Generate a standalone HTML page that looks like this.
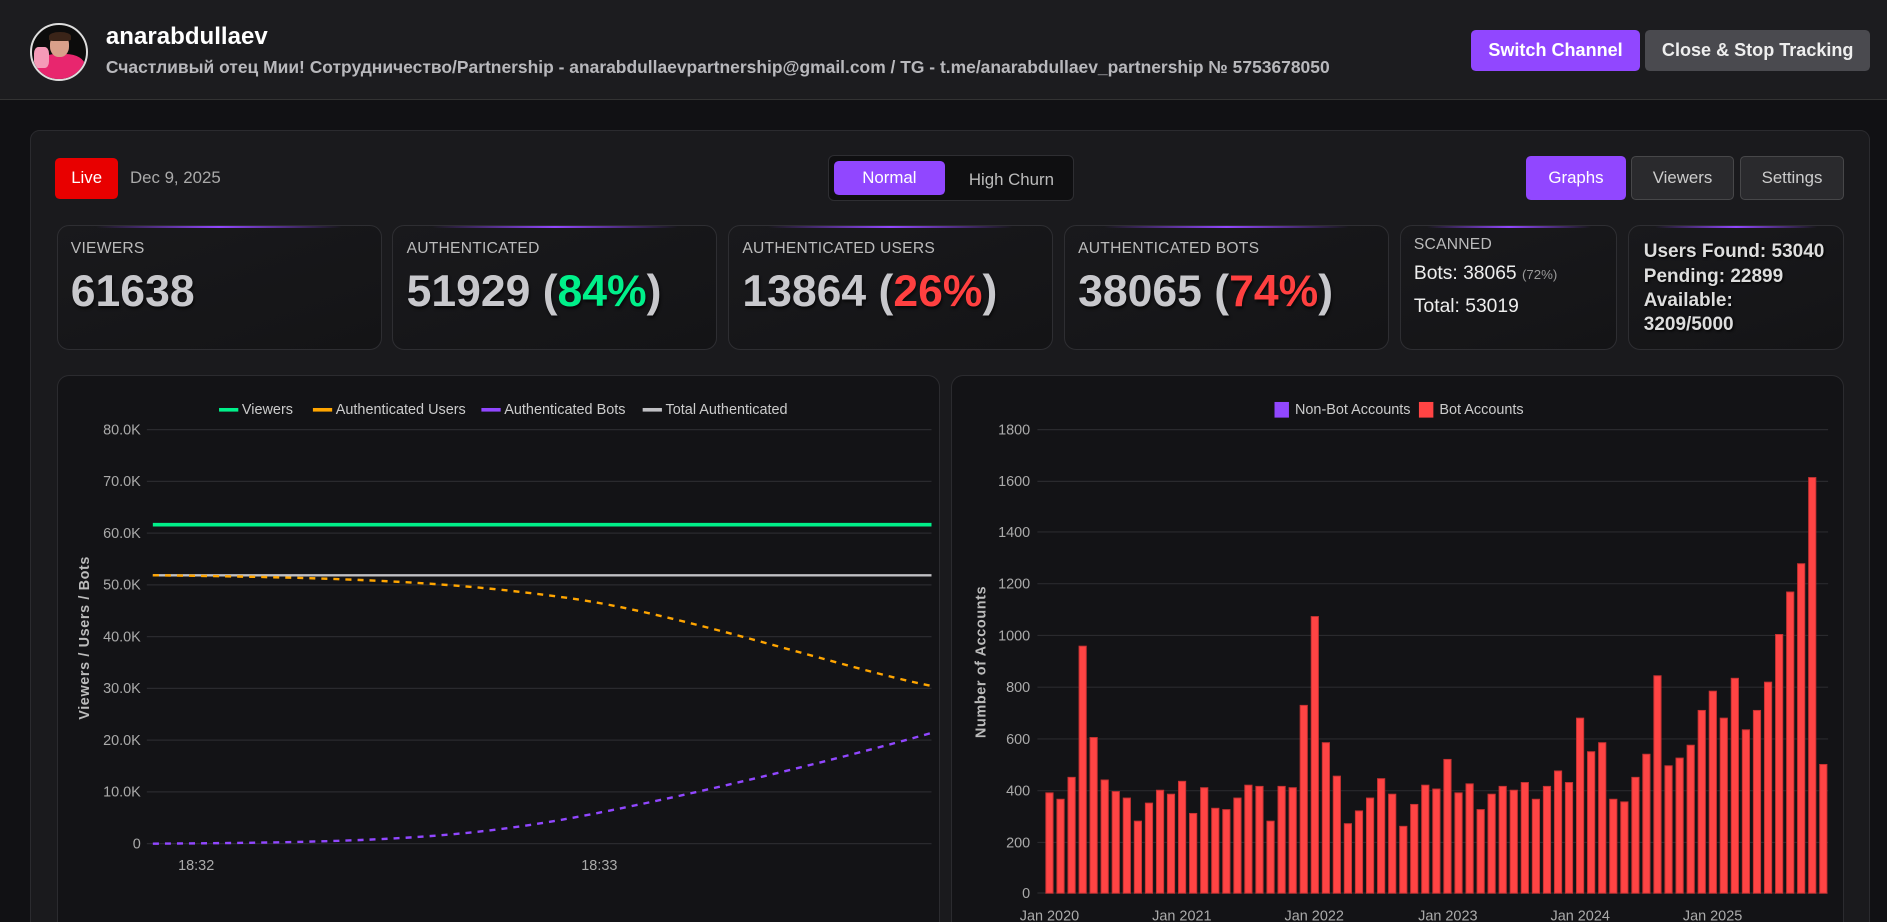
<!DOCTYPE html>
<html><head><meta charset="utf-8"><style>
*{box-sizing:border-box;margin:0;padding:0}
html,body{width:1887px;height:922px;overflow:hidden;background:#111114}
#w{zoom:1.2035;width:1568px;height:766px;position:relative;font-family:"Liberation Sans","Noto Sans CJK SC",sans-serif;color:#ddd;overflow:hidden;background:#111114}
.a{position:absolute}
.hdr{left:0;top:0;width:1568px;height:83px;background:#1c1c1f;border-bottom:1px solid #333}
.btn{position:absolute;border-radius:4px;font-weight:bold;font-size:15px;color:#fff;display:flex;align-items:center;justify-content:center}
.panel{left:25px;top:108px;width:1529px;height:658px;background:#1a1a1d;border:1px solid #2b2b2f;border-bottom:none;border-radius:8px 8px 0 0}
.tab{position:absolute;top:130px;height:36px;border-radius:4px;font-size:14px;display:flex;align-items:center;justify-content:center;color:#ccc;background:#2a2a2d;border:1px solid #474749}
.card{position:absolute;top:187px;height:104px;border:1px solid #2e2e32;border-radius:10px;background:linear-gradient(160deg,#19191c,#141416)}
.card:before{content:"";position:absolute;left:12%;right:12%;top:0;height:2px;background:linear-gradient(90deg,transparent,#9147ff,transparent)}
.lab{position:absolute;left:11px;top:12px;font-size:13px;color:#bbb;letter-spacing:.2px}
.num{position:absolute;left:11px;top:34px;font-size:37px;font-weight:bold;color:#c8c8cc;text-shadow:1px 2px 2px rgba(0,0,0,.6)}
.chart{position:absolute;top:312px;height:454px;background:#131316;border:1px solid #2b2b2f;border-bottom:none;border-radius:10px 10px 0 0}
</style></head><body><div id="w">
<div class="a hdr"></div>
<div class="a" style="left:25px;top:19px;width:48px;height:48px;border-radius:50%;background:#0c0c0c;border:2px solid #ddd;overflow:hidden">
 <div class="a" style="left:4px;top:24px;width:40px;height:24px;background:#e8266e;border-radius:40% 40% 0 0"></div>
 <div class="a" style="left:15px;top:8px;width:16px;height:19px;background:#d9a08a;border-radius:45%"></div>
 <div class="a" style="left:14px;top:6px;width:18px;height:7px;background:#3a2418;border-radius:50% 50% 20% 20%"></div>
 <div class="a" style="left:2px;top:18px;width:12px;height:18px;background:#f59ab8;border-radius:30%"></div>
</div>
<div class="a" style="left:88px;top:19px;font-size:20px;font-weight:bold;color:#fff">anarabdullaev</div>
<div class="a" style="left:88px;top:47px;font-size:14.5px;font-weight:bold;color:#b8b8bc">Счастливый отец Мии! Сотрудничество/Partnership - anarabdullaevpartnership@gmail.com / TG - t.me/anarabdullaev_partnership № 5753678050</div>
<div class="btn" style="left:1222px;top:25px;width:141px;height:34px;background:#9147ff">Switch Channel</div>
<div class="btn" style="left:1367px;top:25px;width:187px;height:34px;background:#4a4a4f;color:#eee">Close &amp; Stop Tracking</div>

<div class="a panel"></div>
<div class="btn" style="left:46px;top:131px;width:52px;height:34px;background:#e80000;font-weight:normal;font-size:14px">Live</div>
<div class="a" style="left:108px;top:140px;font-size:14px;color:#aaa">Dec 9, 2025</div>
<div class="a" style="left:688px;top:129px;width:204px;height:38px;background:#0f0f11;border:1px solid #2e2e32;border-radius:5px"></div>
<div class="btn" style="left:693px;top:134px;width:92px;height:28px;background:#9147ff;font-weight:normal;font-size:14px">Normal</div>
<div class="a" style="left:805px;top:141px;font-size:14px;color:#bbb">High Churn</div>
<div class="tab" style="left:1268px;width:83px;background:#9147ff;border-color:#9147ff;color:#fff">Graphs</div>
<div class="tab" style="left:1355px;width:86px">Viewers</div>
<div class="tab" style="left:1446px;width:86px">Settings</div>

<div class="card" style="left:47px;width:270px"><div class="lab">VIEWERS</div><div class="num">61638</div></div>
<div class="card" style="left:326px;width:270px"><div class="lab">AUTHENTICATED</div><div class="num">51929 (<span style="color:#00f08a">84%</span>)</div></div>
<div class="card" style="left:605px;width:270px"><div class="lab">AUTHENTICATED USERS</div><div class="num">13864 (<span style="color:#ff4040">26%</span>)</div></div>
<div class="card" style="left:884px;width:270px"><div class="lab">AUTHENTICATED BOTS</div><div class="num">38065 (<span style="color:#ff4040">74%</span>)</div></div>
<div class="card" style="left:1163px;width:181px"><div class="lab" style="top:8px">SCANNED</div>
 <div class="a" style="left:11px;top:31px;font-size:16px;color:#eee">Bots: 38065 <span style="font-size:11px;color:#999">(72%)</span></div>
 <div class="a" style="left:11px;top:58px;font-size:16px;color:#eee">Total: 53019</div></div>
<div class="card" style="left:1353px;width:179px"><div class="a" style="left:12px;top:12px;font-size:15.8px;font-weight:bold;color:#ddd;line-height:20px;text-shadow:1px 1px 2px #000">Users Found: 53040<br>Pending: 22899<br>Available:<br>3209/5000</div></div>

<div class="chart" style="left:47px;width:734px"></div>
<div class="chart" style="left:790px;width:742px"></div>

<svg class="a" style="left:0;top:0" width="1568" height="766" font-family="Liberation Sans,sans-serif">
<g stroke="#2a2a2e" stroke-width="1">
<line x1="122" x2="774" y1="357" y2="357"/><line x1="122" x2="774" y1="400" y2="400"/><line x1="122" x2="774" y1="443" y2="443"/><line x1="122" x2="774" y1="486" y2="486"/><line x1="122" x2="774" y1="529" y2="529"/><line x1="122" x2="774" y1="572" y2="572"/><line x1="122" x2="774" y1="615" y2="615"/><line x1="122" x2="774" y1="658" y2="658"/><line x1="122" x2="774" y1="701" y2="701"/>
<line x1="862" x2="1519" y1="357" y2="357"/><line x1="862" x2="1519" y1="400" y2="400"/><line x1="862" x2="1519" y1="442" y2="442"/><line x1="862" x2="1519" y1="485" y2="485"/><line x1="862" x2="1519" y1="528" y2="528"/><line x1="862" x2="1519" y1="571" y2="571"/><line x1="862" x2="1519" y1="614" y2="614"/><line x1="862" x2="1519" y1="657" y2="657"/><line x1="862" x2="1519" y1="742" y2="742"/><line x1="862" x2="1519" y1="700" y2="700"/>
</g>
<g fill="#aaa" font-size="12" text-anchor="end">
<text x="117" y="361">80.0K</text><text x="117" y="404">70.0K</text><text x="117" y="447">60.0K</text><text x="117" y="490">50.0K</text><text x="117" y="533">40.0K</text><text x="117" y="576">30.0K</text><text x="117" y="619">20.0K</text><text x="117" y="662">10.0K</text><text x="117" y="705">0</text>
<text x="856" y="361">1800</text><text x="856" y="404">1600</text><text x="856" y="446">1400</text><text x="856" y="489">1200</text><text x="856" y="532">1000</text><text x="856" y="575">800</text><text x="856" y="618">600</text><text x="856" y="661">400</text><text x="856" y="704">200</text><text x="856" y="746">0</text>
</g>
<g fill="#aaa" font-size="12" text-anchor="middle">
<text x="163" y="723">18:32</text><text x="498" y="723">18:33</text>
<text x="872" y="765">Jan 2020</text><text x="982" y="765">Jan 2021</text><text x="1092" y="765">Jan 2022</text><text x="1203" y="765">Jan 2023</text><text x="1313" y="765">Jan 2024</text><text x="1423" y="765">Jan 2025</text>
</g>
<g fill="#bbb" font-size="12" font-weight="bold" text-anchor="middle">
<text transform="translate(74,530) rotate(-90)" letter-spacing="0.5">Viewers / Users / Bots</text>
<text transform="translate(819,550) rotate(-90)" letter-spacing="0.5">Number of Accounts</text>
</g>
<g font-size="12" fill="#ccc">
<rect x="182" y="339" width="16" height="3" fill="#00f08a"/><text x="201" y="344">Viewers</text>
<rect x="260" y="339" width="16" height="3" fill="#ffa500"/><text x="279" y="344">Authenticated Users</text>
<rect x="400" y="339" width="16" height="3" fill="#9147ff"/><text x="419" y="344">Authenticated Bots</text>
<rect x="534" y="339" width="16" height="3" fill="#c0c0c4"/><text x="553" y="344">Total Authenticated</text>
<rect x="1059" y="334" width="12" height="13" fill="#9147ff"/><text x="1076" y="344">Non-Bot Accounts</text>
<rect x="1179" y="334" width="12" height="13" fill="#ff4444"/><text x="1196" y="344">Bot Accounts</text>
</g>
<line x1="127" x2="774" y1="436" y2="436" stroke="#00f08a" stroke-width="3"/>
<line x1="127" x2="774" y1="478" y2="478" stroke="#c0c0c4" stroke-width="2"/>
<path d="M127,478 C300,480 380,484 473,497 S700,555 774,570" fill="none" stroke="#ffa500" stroke-width="2" stroke-dasharray="5,5"/>
<path d="M127,701 C300,700 380,697 473,680 S700,630 774,609" fill="none" stroke="#9147ff" stroke-width="2" stroke-dasharray="5,5"/>
<g fill="#ff4444" stroke="#c83232" stroke-width="0.8">
<rect x="869.0" y="658.8" width="6" height="83.4"/><rect x="878.2" y="664.1" width="6" height="78.1"/><rect x="887.4" y="645.9" width="6" height="96.3"/><rect x="896.6" y="536.9" width="6" height="205.3"/><rect x="905.7" y="612.8" width="6" height="129.4"/><rect x="914.9" y="648.1" width="6" height="94.1"/><rect x="924.1" y="657.7" width="6" height="84.5"/><rect x="933.3" y="663.1" width="6" height="79.1"/><rect x="942.5" y="682.3" width="6" height="59.9"/><rect x="951.7" y="667.3" width="6" height="74.9"/>
<rect x="960.9" y="656.6" width="6" height="85.6"/><rect x="970.0" y="659.9" width="6" height="82.3"/><rect x="979.2" y="649.2" width="6" height="93.0"/><rect x="988.4" y="675.9" width="6" height="66.3"/><rect x="997.6" y="654.5" width="6" height="87.7"/><rect x="1006.8" y="671.6" width="6" height="70.6"/><rect x="1016.0" y="672.7" width="6" height="69.5"/><rect x="1025.2" y="663.1" width="6" height="79.1"/><rect x="1034.3" y="652.4" width="6" height="89.8"/><rect x="1043.5" y="653.4" width="6" height="88.8"/>
<rect x="1052.7" y="682.3" width="6" height="59.9"/><rect x="1061.9" y="653.4" width="6" height="88.8"/><rect x="1071.1" y="654.5" width="6" height="87.7"/><rect x="1080.3" y="586.1" width="6" height="156.1"/><rect x="1089.5" y="512.3" width="6" height="229.9"/><rect x="1098.7" y="617.1" width="6" height="125.1"/><rect x="1107.8" y="644.9" width="6" height="97.3"/><rect x="1117.0" y="684.4" width="6" height="57.8"/><rect x="1126.2" y="673.8" width="6" height="68.4"/><rect x="1135.4" y="663.1" width="6" height="79.1"/>
<rect x="1144.6" y="647.0" width="6" height="95.2"/><rect x="1153.8" y="659.9" width="6" height="82.3"/><rect x="1163.0" y="686.6" width="6" height="55.6"/><rect x="1172.1" y="668.4" width="6" height="73.8"/><rect x="1181.3" y="652.4" width="6" height="89.8"/><rect x="1190.5" y="655.6" width="6" height="86.6"/><rect x="1199.7" y="631.0" width="6" height="111.2"/><rect x="1208.9" y="658.8" width="6" height="83.4"/><rect x="1218.1" y="651.3" width="6" height="90.9"/><rect x="1227.3" y="672.7" width="6" height="69.5"/>
<rect x="1236.4" y="659.9" width="6" height="82.3"/><rect x="1245.6" y="653.4" width="6" height="88.8"/><rect x="1254.8" y="656.6" width="6" height="85.6"/><rect x="1264.0" y="650.2" width="6" height="92.0"/><rect x="1273.2" y="664.1" width="6" height="78.1"/><rect x="1282.4" y="653.4" width="6" height="88.8"/><rect x="1291.6" y="640.6" width="6" height="101.6"/><rect x="1300.7" y="650.2" width="6" height="92.0"/><rect x="1309.9" y="596.7" width="6" height="145.5"/><rect x="1319.1" y="624.6" width="6" height="117.6"/>
<rect x="1328.3" y="617.1" width="6" height="125.1"/><rect x="1337.5" y="664.1" width="6" height="78.1"/><rect x="1346.7" y="666.3" width="6" height="75.9"/><rect x="1355.9" y="645.9" width="6" height="96.3"/><rect x="1365.0" y="626.7" width="6" height="115.5"/><rect x="1374.2" y="561.5" width="6" height="180.7"/><rect x="1383.4" y="636.3" width="6" height="105.9"/><rect x="1392.6" y="629.9" width="6" height="112.3"/><rect x="1401.8" y="619.2" width="6" height="123.0"/><rect x="1411.0" y="590.3" width="6" height="151.9"/>
<rect x="1420.2" y="574.3" width="6" height="167.9"/><rect x="1429.3" y="596.7" width="6" height="145.5"/><rect x="1438.5" y="563.6" width="6" height="178.6"/><rect x="1447.7" y="606.4" width="6" height="135.8"/><rect x="1456.9" y="590.3" width="6" height="151.9"/><rect x="1466.1" y="566.8" width="6" height="175.4"/><rect x="1475.3" y="527.2" width="6" height="215.0"/><rect x="1484.5" y="491.9" width="6" height="250.3"/><rect x="1493.6" y="468.4" width="6" height="273.8"/><rect x="1502.8" y="396.8" width="6" height="345.4"/>
<rect x="1512.0" y="635.2" width="6" height="107.0"/>
</g>
</svg>
</div></body></html>
